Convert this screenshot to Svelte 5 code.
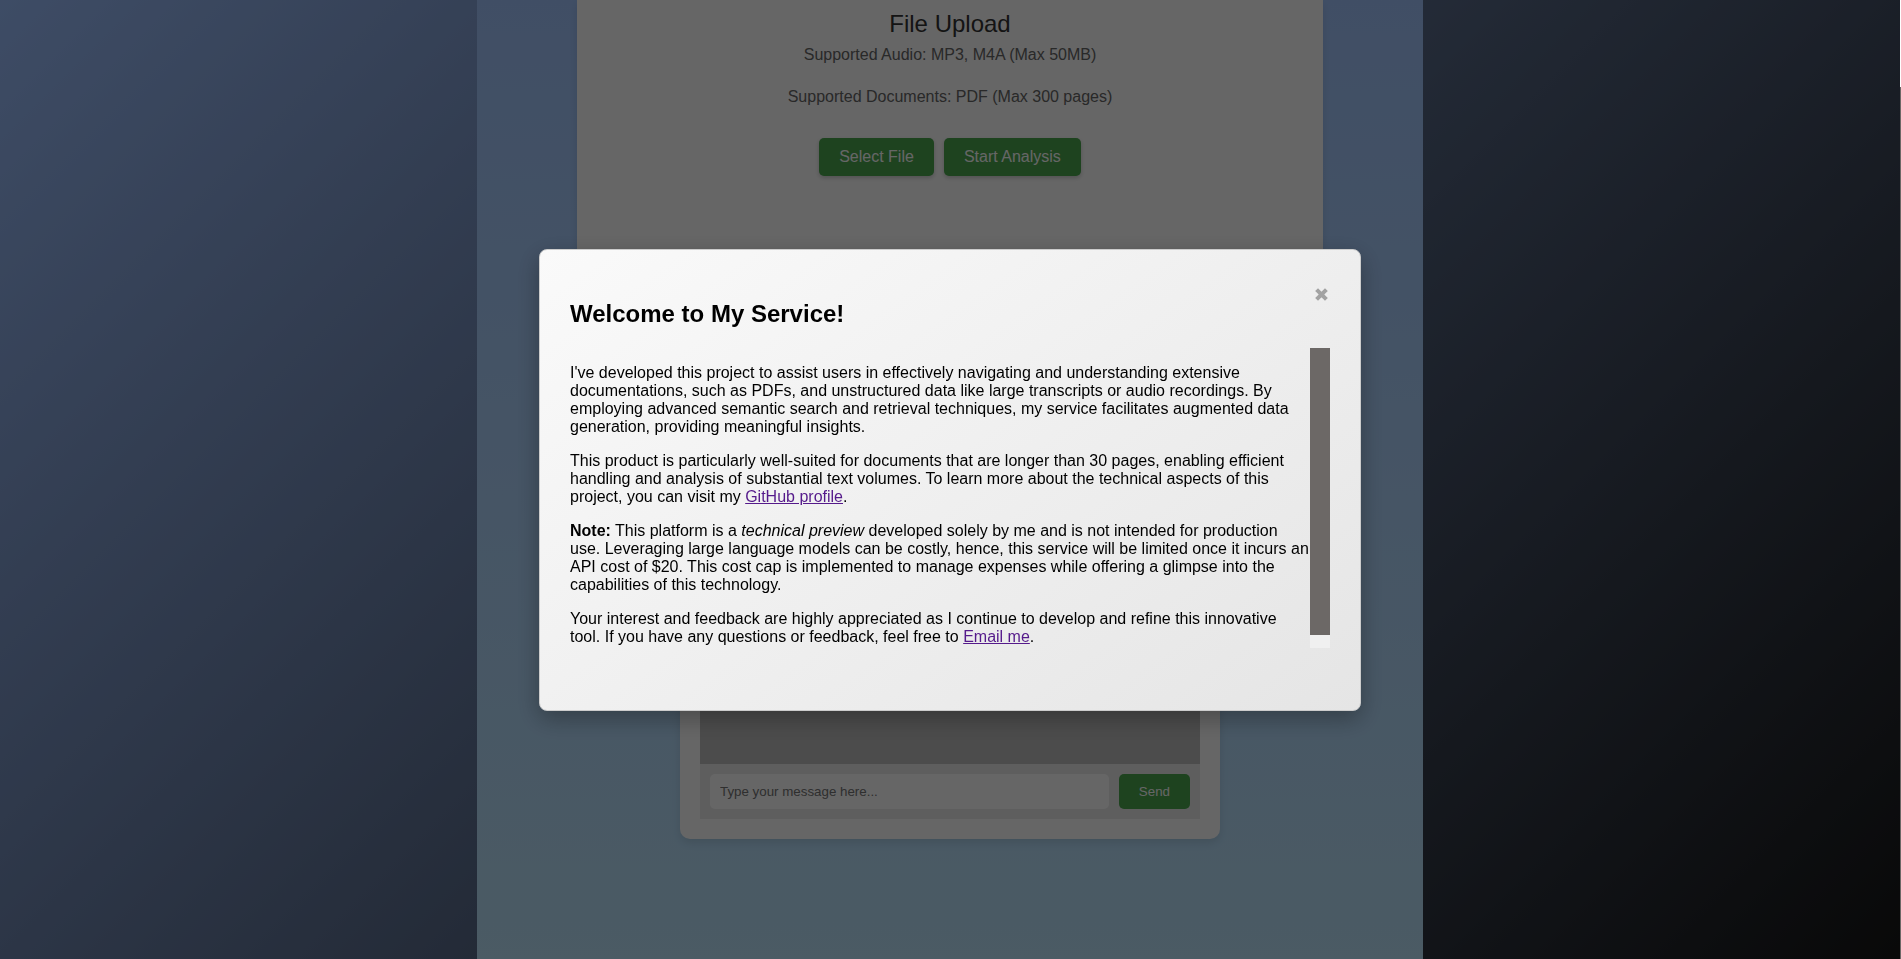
<script>
  let open = $state(true);
  let message = $state('');
</script>

<div class="shell">
  <div class="page">
    <main class="column">
      <section class="card upload">
        <h3>File Upload</h3>
        <p>Supported Audio: MP3, M4A (Max 50MB)</p>
        <p>Supported Documents: PDF (Max 300 pages)</p>
        <div class="actions">
          <button type="button" class="btn raised">Select File</button>
          <button type="button" class="btn raised">Start Analysis</button>
        </div>
      </section>

      <section class="card chat">
        <div class="messages"></div>
        <form class="composer" onsubmit={(e) => e.preventDefault()}>
          <input type="text" aria-label="Message" placeholder="Type your message here..." bind:value={message} />
          <button type="submit" class="btn send">Send</button>
        </form>
      </section>
    </main>
  </div>
  <div class="page-track" aria-hidden="true"><div class="page-thumb"></div></div>
</div>

{#if open}
  <div class="overlay">
    <div class="modal" role="dialog" aria-modal="true" aria-labelledby="welcome-title">
      <button type="button" class="close" aria-label="Close" onclick={() => (open = false)}>
        <svg width="13" height="13" viewBox="0 0 13 13" aria-hidden="true">
          <path d="M1.6 1.6 L11.4 11.4 M11.4 1.6 L1.6 11.4" />
        </svg>
      </button>
      <h2 id="welcome-title">Welcome to My Service!</h2>
      <div class="body">
        <div class="copy">
          <p>
            I've developed this project to assist users in effectively navigating and understanding extensive
            documentations, such as PDFs, and unstructured data like large transcripts or audio recordings. By
            employing advanced semantic search and retrieval techniques, my service facilitates augmented data
            generation, providing meaningful insights.
          </p>
          <p>
            This product is particularly well-suited for documents that are longer than 30 pages, enabling efficient
            handling and analysis of substantial text volumes. To learn more about the technical aspects of this
            project, you can visit my <a href="#github">GitHub profile</a>.
          </p>
          <p>
            <strong>Note:</strong> This platform is a <em>technical preview</em> developed solely by me and is not
            intended for production use. Leveraging large language models can be costly, hence, this service will be
            limited once it incurs an API cost of $20. This cost cap is implemented to manage expenses while offering
            a glimpse into the capabilities of this technology.
          </p>
          <p>
            Your interest and feedback are highly appreciated as I continue to develop and refine this innovative
            tool. If you have any questions or feedback, feel free to <a href="#email">Email me</a>.
          </p>
        </div>
        <div class="track" aria-hidden="true"><div class="thumb"></div></div>
      </div>
    </div>
  </div>
{/if}

<style>
  :global(body) {
    margin: 0;
    font-family: Arial, 'Liberation Sans', sans-serif;
    font-size: 16px;
    line-height: 18px;
  }
  .shell {
    display: flex;
    min-height: 100vh;
  }
  .page {
    flex: 1;
    display: flex;
    justify-content: center;
    background: linear-gradient(135deg, #9bbefd, #171717);
  }
  .page-track {
    width: 1px;
    padding-top: 87px;
    box-sizing: border-box;
    display: flex;
    background: #fff;
  }
  .page-thumb {
    flex: 1;
    background: #6c6866;
  }
  .column {
    box-sizing: border-box;
    width: 100%;
    max-width: 946px;
    padding: 0 100px;
    display: flex;
    flex-direction: column;
    align-items: center;
    gap: 20px;
    background: linear-gradient(to bottom, #a1c4fd, #bbe3fb);
  }
  .card {
    box-sizing: border-box;
    background: #fff;
    box-shadow: 0 4px 8px rgba(0, 0, 0, 0.1);
  }
  .upload {
    width: 100%;
    height: 400px;
    padding-top: 10px;
    text-align: center;
  }
  h3 {
    margin: 0 0 5px;
    font-size: 24px;
    line-height: 28px;
    font-weight: 400;
    color: #333;
  }
  .upload p {
    margin: 0;
    line-height: 24px;
    padding-bottom: 18px;
    color: #666;
  }
  .actions {
    display: flex;
    justify-content: center;
    gap: 10px;
    margin-top: 11px;
  }
  .btn {
    border: 0;
    border-radius: 5px;
    padding: 10px 20px;
    background: #4ba74f;
    color: #fff;
    font-family: inherit;
    cursor: pointer;
  }
  .raised {
    font-size: 16px;
    line-height: 18px;
    box-shadow: 0 2px 4px rgba(0, 0, 0, 0.2);
  }
  .chat {
    width: 100%;
    max-width: 540px;
    padding: 20px;
    border-radius: 10px;
  }
  .messages {
    height: 324px;
    background: #bebebe;
  }
  .composer {
    display: flex;
    gap: 10px;
    padding: 10px;
    background: #ebebeb;
  }
  .composer input {
    box-sizing: border-box;
    flex: 1;
    min-width: 0;
    height: 35px;
    padding: 10px;
    border: 0;
    border-radius: 5px;
    background: #fff;
    font-family: inherit;
  }
  .composer input::placeholder {
    color: #757575;
  }
  .overlay {
    position: fixed;
    inset: 0 1px 0 0;
    display: flex;
    align-items: center;
    justify-content: center;
    background: rgba(0, 0, 0, 0.6);
  }
  .modal {
    width: 40%;
    padding: 30px 30px 62px;
    border: 1px solid #ccc;
    border-radius: 8px;
    background: linear-gradient(145deg, #fafafa, #e5e5e5);
    box-shadow: 0 8px 25px rgba(0, 0, 0, 0.3);
  }
  .close {
    float: right;
    display: flex;
    align-items: center;
    height: 30px;
    padding: 0 2px 0 1px;
    border: 0;
    background: none;
    cursor: pointer;
  }
  .close path {
    fill: none;
    stroke: #a2a2a2;
    stroke-width: 4;
  }
  h2 {
    margin: 20px 0;
    font-size: 24px;
    line-height: 28px;
    font-weight: 700;
  }
  .body {
    display: flex;
    height: 300px;
  }
  .copy {
    flex: 1;
    overflow-y: auto;
    scrollbar-width: none;
  }
  .copy p {
    margin: 16px 0;
  }
  .copy a {
    color: #551a8b;
  }
  .track {
    width: 20px;
    background: #f0f0f0;
  }
  .thumb {
    height: 287px;
    background: #6c6866;
  }
</style>
